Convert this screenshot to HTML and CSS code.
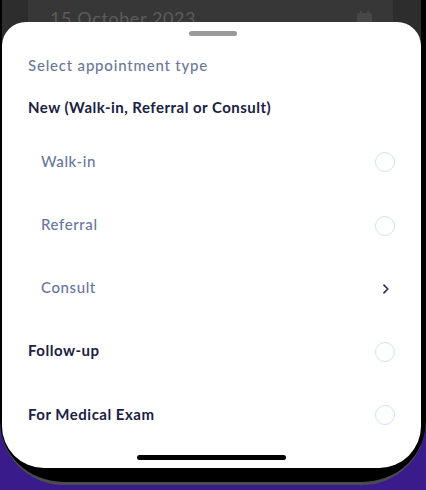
FILE: index.html
```html
<!DOCTYPE html>
<html>
<head>
<meta charset="utf-8">
<link rel="stylesheet" href="styles.css">
</head>
<body>
<div class="phone">
  <div class="screen">
    <div class="behind">
      <div class="date-card">
        <span class="date-text">15 October 2023</span>
        <svg class="cal" width="15" height="14" viewBox="0 0 15 14"><rect x="0" y="2" width="15" height="12" rx="2" fill="#474747"/><rect x="3" y="0" width="2" height="4" fill="#474747"/><rect x="10" y="0" width="2" height="4" fill="#474747"/></svg>
      </div>
    </div>
    <div class="sheet">
      <div class="handle"></div>
      <div class="title">Select appointment type</div>
      <div class="group-head">New (Walk-in, Referral or Consult)</div>
      <div class="row sub r64"><span>Walk-in</span><span class="radio"></span></div>
      <div class="row sub r63"><span>Referral</span><span class="radio"></span></div>
      <div class="row sub r63"><span>Consult</span>
        <svg class="chev" width="8" height="10" viewBox="0 0 8 10"><path d="M2 1.2 L5.8 5 L2 8.8" fill="none" stroke="#2a3358" stroke-width="1.7" stroke-linecap="round" stroke-linejoin="round"/></svg>
      </div>
      <div class="row main r63"><span>Follow-up</span><span class="radio"></span></div>
      <div class="row main r64"><span>For Medical Exam</span><span class="radio"></span></div>
      <div class="home"></div>
    </div>
  </div>
</div>
</body>
</html>
```
FILE: styles.css
```css
html, body {
  margin: 0;
  padding: 0;
}
body {
  width: 426px;
  height: 490px;
  overflow: hidden;
  background: #3a1b8c;
  font-family: "Lato", "Liberation Sans", sans-serif;
}
.phone {
  height: 485px;
  background: #000;
  border-radius: 0 0 64px 64px;
  border-bottom: 3px solid #4b4b4b;
  padding: 0 5px 0 2px;
  box-sizing: border-box;
}
.screen {
  height: 468px;
  background: #2d2d2d;
  border-radius: 0 0 42px 42px;
  overflow: hidden;
  display: flex;
  flex-direction: column;
}
.behind {
  height: 22px;
  flex: none;
  overflow: hidden;
  padding: 0 28px 0 26px;
}
.date-card {
  margin-top: -10px;
  height: 60px;
  background: #373737;
  border-radius: 12px;
  display: flex;
  align-items: flex-start;
  justify-content: space-between;
  padding: 17px 21px 0 22px;
  box-sizing: border-box;
}
.date-text {
  font-size: 18px;
  line-height: 22px;
  color: #5c5c5c;
  letter-spacing: 0.6px;
}
.cal {
  margin-top: 4px;
}
.sheet {
  flex: 1;
  background: #fff;
  border-radius: 24px 24px 0 0;
  display: flex;
  flex-direction: column;
  padding: 9px 26px 0 26px;
}
.handle {
  align-self: center;
  width: 48px;
  height: 5px;
  border-radius: 3px;
  background: #9b9b9b;
  margin-left: 2px;
}
.title {
  margin-top: 19px;
  font-size: 15px;
  line-height: 20px;
  font-weight: 500;
  color: #6c7899;
  letter-spacing: 0.8px;
}
.group-head {
  margin-top: 22px;
  font-size: 15px;
  line-height: 20px;
  font-weight: 700;
  color: #1b2143;
  letter-spacing: 0.48px;
}
.row {
  display: flex;
  align-items: center;
  justify-content: space-between;
  font-size: 15px;
  line-height: 20px;
}
.row span:first-child {
  margin-top: -3px;
}
.r64 { height: 64px; }
.r63 { height: 63px; }
.sub {
  padding-left: 13px;
  color: #67769f;
  font-weight: 500;
  letter-spacing: 0.6px;
}
.group-head + .row { margin-top: 13px; }
.main {
  color: #1b2143;
  font-weight: 700;
  letter-spacing: 0.5px;
}
.radio {
  width: 18px;
  height: 18px;
  border: 1.6px solid #d5def6;
  border-radius: 50%;
  flex: none;
}
.chev {
  margin-right: 5px;
}
.home {
  align-self: center;
  margin-top: 8px;
  width: 149px;
  height: 5px;
  border-radius: 3px;
  background: #000;
}
```
